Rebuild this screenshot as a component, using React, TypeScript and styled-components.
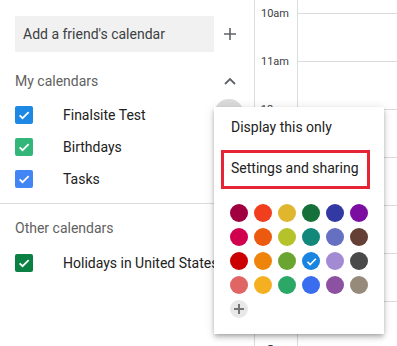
import React from 'react'
import styled, { createGlobalStyle } from 'styled-components'

const GlobalStyle = createGlobalStyle`
	html, body {
		margin: 0;
		padding: 0;
		background: #fff;
	}
	body {
		font-family: Roboto, "Liberation Sans", Arial, sans-serif;
		-webkit-font-smoothing: antialiased;
	}
`

const HOURS = ['10am', '11am', '12pm', '1pm', '2pm', '3pm', '4pm', '5pm']

const MY_CALENDARS = [
	{ name: 'Finalsite Test', color: '#1e88e5', hovered: true },
	{ name: 'Birthdays', color: '#33b679' },
	{ name: 'Tasks', color: '#4285f4' },
]

const OTHER_CALENDARS = [{ name: 'Holidays in United States', color: '#0b8043' }]

const SWATCHES = [
	'#a0003f', '#f03e1e', '#e0b62e', '#16703a', '#3339a3', '#7b0da0',
	'#d0004f', '#ec5a0f', '#b5c22a', '#11887a', '#6570c2', '#643f35',
	'#cb0000', '#ee8409', '#6aa531', '#1a85e0', '#a38bd3', '#4a4a4a',
	'#e06565', '#f5b022', '#2ca866', '#3a6cef', '#8c51a0', '#968a7a',
]
const SELECTED = 15

const Check = ({ size = 14 }: { size?: number }) => (
	<svg width={size} height={size} viewBox="0 0 24 24">
		<path d="M4.5 12.5l5 5L20 7" fill="none" stroke="#fff" strokeWidth="3" />
	</svg>
)

export default function App() {
	return (
		<Page>
			<GlobalStyle />
			<Sidebar>
				<AddRow>
					<AddBox>Add a friend's calendar</AddBox>
					<IconSlot>
						<svg width="12" height="12" viewBox="0 0 12 12">
							<path d="M6 0v12M0 6h12" stroke="#5f6368" strokeWidth="1.6" />
						</svg>
					</IconSlot>
				</AddRow>
				<SectionHeader>
					My calendars
					<IconSlot>
						<svg width="12" height="8" viewBox="0 0 12 8">
							<path d="M1 7l5-5 5 5" fill="none" stroke="#5f6368" strokeWidth="1.8" />
						</svg>
					</IconSlot>
				</SectionHeader>
				{MY_CALENDARS.map((c) => (
					<CalendarRow key={c.name}>
						<Box $color={c.color}>
							<Check />
						</Box>
						<Label>{c.name}</Label>
						{c.hovered && <HoverDot />}
					</CalendarRow>
				))}
				<Divider />
				<SectionHeader $tight>Other calendars</SectionHeader>
				{OTHER_CALENDARS.map((c) => (
					<CalendarRow key={c.name}>
						<Box $color={c.color}>
							<Check />
						</Box>
						<Label>{c.name}</Label>
					</CalendarRow>
				))}
			</Sidebar>
			<TimeColumn>
				<TimeList>
					{HOURS.map((h) => (
						<TimeLabel key={h}>{h}</TimeLabel>
					))}
				</TimeList>
			</TimeColumn>
			<DayColumn>
				<TopGap />
				{HOURS.map((h) => (
					<Slot key={h} />
				))}
			</DayColumn>

			<Menu>
				<MenuItem>Display this only</MenuItem>
				<HighlightItem>Settings and sharing</HighlightItem>
				<Swatches>
					{SWATCHES.map((c, i) => (
						<Swatch key={c} $color={c}>
							{i === SELECTED && <Check size={13} />}
						</Swatch>
					))}
					<AddSwatch>
						<svg width="10" height="10" viewBox="0 0 10 10">
							<path d="M5 0v10M0 5h10" stroke="#757575" strokeWidth="2" />
						</svg>
					</AddSwatch>
				</Swatches>
			</Menu>
		</Page>
	)
}

const Page = styled.div`
	position: relative;
	width: 397px;
	height: 346px;
	overflow: hidden;
	display: flex;
	background: #fff;
`

const Sidebar = styled.div`
	width: 254px;
	flex-shrink: 0;
	border-right: 1px solid #dadce0;
	padding-top: 16px;
	box-sizing: content-box;
`

const AddRow = styled.div`
	display: flex;
	align-items: center;
	padding-left: 15px;
`

const AddBox = styled.div`
	width: 199px;
	height: 36px;
	box-sizing: border-box;
	padding-left: 8px;
	display: flex;
	align-items: center;
	background: #f1f1f1;
	color: #3c4043;
	font-size: 14px;
`

const IconSlot = styled.div`
	width: 32px;
	display: flex;
	justify-content: center;
	align-items: center;
	margin-left: auto;
	margin-right: 8px;
`

const SectionHeader = styled.div<{ $tight?: boolean }>`
	display: flex;
	align-items: center;
	height: 40px;
	box-sizing: border-box;
	padding-top: ${(p) => (p.$tight ? '2px' : '3px')};
	margin-top: ${(p) => (p.$tight ? '3px' : '7px')};
	padding-left: 15px;
	color: #616161;
	font-size: 14px;
`

const CalendarRow = styled.div`
	position: relative;
	display: flex;
	align-items: center;
	height: 32px;
	padding-left: 15px;
`

const Box = styled.div<{ $color: string }>`
	width: 18px;
	height: 18px;
	border-radius: 2px;
	background: ${(p) => p.$color};
	display: flex;
	align-items: center;
	justify-content: center;
`

const Label = styled.span`
	margin-left: 30px;
	font-size: 14px;
	color: #212121;
	white-space: nowrap;
`

const HoverDot = styled.div`
	position: absolute;
	right: 10px;
	top: 0;
	width: 30px;
	height: 30px;
	border-radius: 50%;
	background: #dcdcdc;
`

const Divider = styled.div`
	height: 1px;
	background: #dadce0;
	margin-top: 8px;
`

const TimeColumn = styled.div`
	width: 42px;
	flex-shrink: 0;
	border-right: 1px solid #dadce0;
`

const TimeList = styled.div`
	margin-top: -11px;
`

const TimeLabel = styled.div`
	height: 48px;
	display: flex;
	align-items: center;
	justify-content: flex-end;
	padding-right: 8px;
	font-size: 11px;
	color: #3c4043;
`

const DayColumn = styled.div`
	flex: 1;
`

const TopGap = styled.div`
	height: 13px;
`

const Slot = styled.div`
	height: 47px;
	border-top: 1px solid #dadce0;
`

const Menu = styled.div`
	position: absolute;
	left: 214px;
	top: 107px;
	width: 170px;
	height: 227px;
	background: #fff;
	box-shadow: 0 4px 5px 0 rgba(0, 0, 0, 0.14), 0 1px 10px 0 rgba(0, 0, 0, 0.12),
		0 2px 4px -1px rgba(0, 0, 0, 0.2);
	z-index: 2;
`

const MenuItem = styled.div`
	height: 40px;
	display: flex;
	align-items: center;
	padding-left: 17px;
	font-size: 14px;
	color: #212121;
`

const HighlightItem = styled(MenuItem)`
	height: 39px;
	box-sizing: border-box;
	margin: 3px 14px 0 7px;
	padding-left: 7px;
	padding-bottom: 4px;
	border: 3px solid #e52535;
`

const Swatches = styled.div`
	display: grid;
	grid-template-columns: repeat(6, 18px);
	gap: 6px;
	padding: 15px 0 0 16px;
`

const Swatch = styled.div<{ $color: string }>`
	width: 18px;
	height: 18px;
	border-radius: 50%;
	background: ${(p) => p.$color};
	display: flex;
	align-items: center;
	justify-content: center;
`

const AddSwatch = styled.div`
	width: 18px;
	height: 18px;
	border-radius: 50%;
	background: #e8e8e8;
	display: flex;
	align-items: center;
	justify-content: center;
`
